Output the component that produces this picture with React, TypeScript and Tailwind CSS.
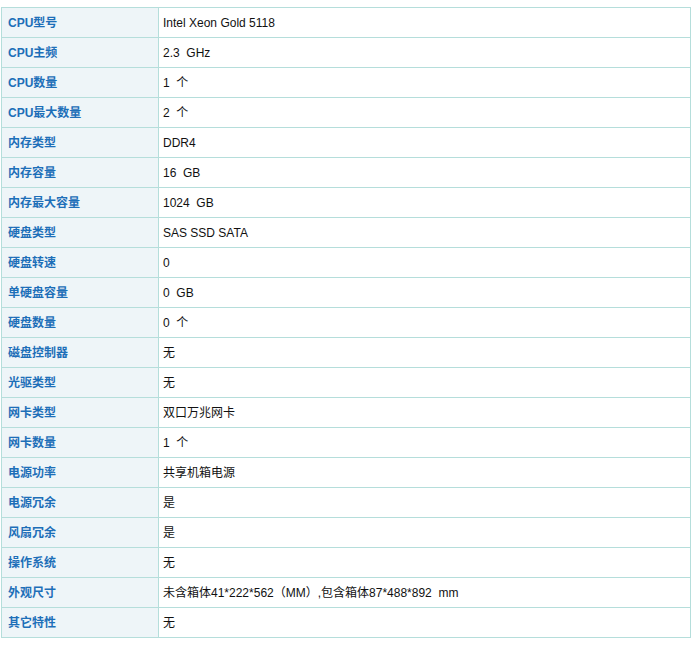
const rows: [string, string][] = [
  ['CPU型号', 'Intel Xeon Gold 5118'],
  ['CPU主频', '2.3  GHz'],
  ['CPU数量', '1  个'],
  ['CPU最大数量', '2  个'],
  ['内存类型', 'DDR4'],
  ['内存容量', '16  GB'],
  ['内存最大容量', '1024  GB'],
  ['硬盘类型', 'SAS SSD SATA'],
  ['硬盘转速', '0'],
  ['单硬盘容量', '0  GB'],
  ['硬盘数量', '0  个'],
  ['磁盘控制器', '无'],
  ['光驱类型', '无'],
  ['网卡类型', '双口万兆网卡'],
  ['网卡数量', '1  个'],
  ['电源功率', '共享机箱电源'],
  ['电源冗余', '是'],
  ['风扇冗余', '是'],
  ['操作系统', '无'],
  ['外观尺寸', '未含箱体41*222*562（MM）,包含箱体87*488*892  mm'],
  ['其它特性', '无'],
]

export default function App() {
  return (
    <div className="bg-white pt-[7px] pl-px" style={{ fontFamily: '"Liberation Sans", Arial, "Noto Sans CJK SC", sans-serif' }}>
      <table className="w-[690px] border-collapse text-[12px]">
        <tbody>
          {rows.map(([k, v]) => (
            <tr key={k} className="h-[30px]">
              <td className="w-[157px] border border-[#b5dedb] bg-[#eef5f8] pl-[6px] font-bold text-[#1d6fb8] whitespace-pre">{k}</td>
              <td className="border border-[#b5dedb] pl-[4px] text-[#111] whitespace-pre">{v}</td>
            </tr>
          ))}
        </tbody>
      </table>
    </div>
  )
}
